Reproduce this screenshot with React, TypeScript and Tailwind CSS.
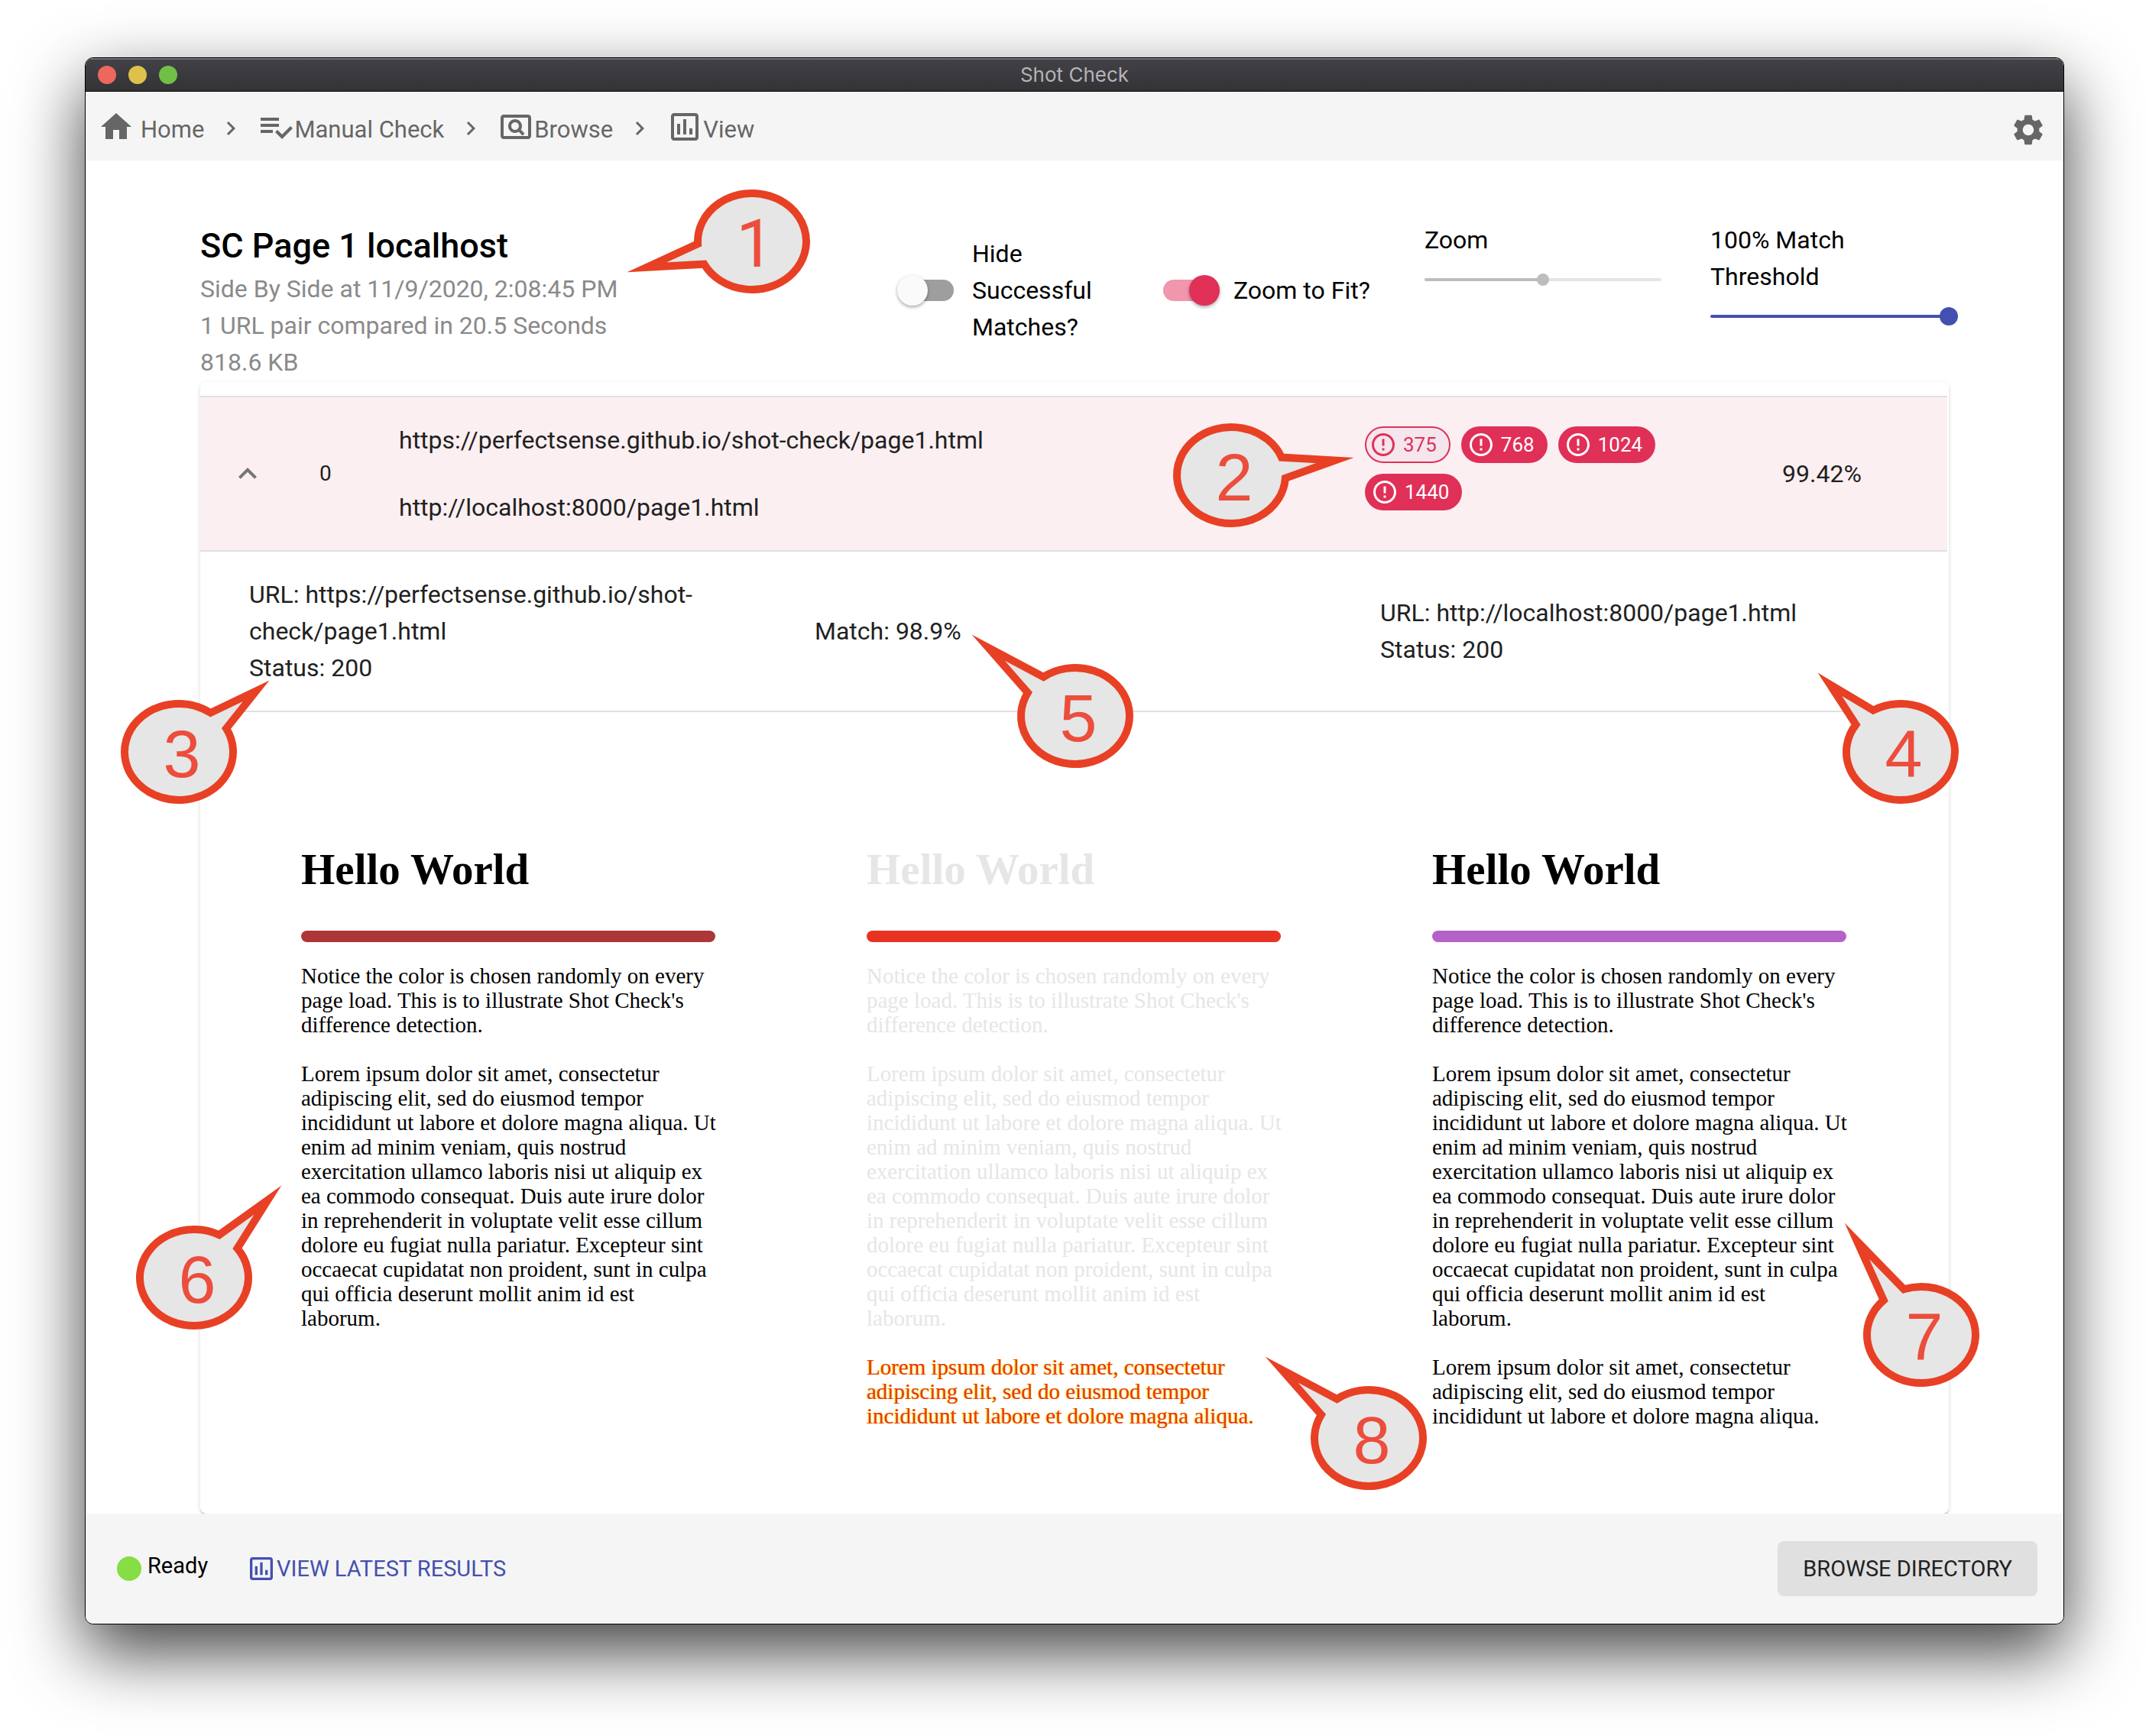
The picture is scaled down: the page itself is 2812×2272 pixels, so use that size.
import React from "react";

type IconProps = { d: string; className?: string };

const paths = {
  home: "M10 20v-6h4v6h5v-8h3L12 3 2 12h3v8z",
  playlist:
    "M14 10H2v2h12v-2zm0-4H2v2h12V6zM2 16h8v-2H2v2zm19.5-4.5L23 13l-6.99 7-4.51-4.5L13 14l3.01 3 5.49-5.5z",
  pageview:
    "M20 4H4c-1.1 0-2 .9-2 2v12c0 1.1.9 2 2 2h16c1.1 0 2-.9 2-2V6c0-1.1-.9-2-2-2zm0 14H4V6h16v12zM11.49 16c.88 0 1.7-.26 2.39-.7l2.44 2.44 1.42-1.42-2.44-2.43c.44-.7.7-1.51.7-2.39C16 9.01 13.99 7 11.5 7S7 9.01 7 11.5 9.01 16 11.49 16zm.01-7c1.38 0 2.5 1.12 2.5 2.5S12.88 14 11.5 14 9 12.88 9 11.5 10.12 9 11.5 9z",
  assessment:
    "M9 17H7v-7h2v7zm4 0h-2V7h2v10zm4 0h-2v-4h2v4zm2 2H5V5h14v14zm0-16H5c-1.1 0-2 .9-2 2v14c0 1.1.9 2 2 2h14c1.1 0 2-.9 2-2V5c0-1.1-.9-2-2-2z",
  chevronRight: "M10 6L8.59 7.41 13.17 12l-4.58 4.59L10 18l6-6z",
  chevronUp: "M7.41 15.41L12 10.83l4.59 4.58L18 14l-6-6-6 6z",
  settings:
    "M19.14 12.94c.04-.3.06-.61.06-.94 0-.32-.02-.64-.07-.94l2.03-1.58c.18-.14.23-.41.12-.61l-1.92-3.32c-.12-.22-.37-.29-.59-.22l-2.39.96c-.5-.38-1.03-.7-1.62-.94l-.36-2.54c-.04-.24-.24-.41-.48-.41h-3.84c-.24 0-.43.17-.47.41l-.36 2.54c-.59.24-1.13.57-1.62.94l-2.39-.96c-.22-.08-.47 0-.59.22L2.74 8.87c-.12.21-.08.47.12.61l2.03 1.58c-.05.3-.09.63-.09.94s.02.64.07.94l-2.03 1.58c-.18.14-.23.41-.12.61l1.92 3.32c.12.22.37.29.59.22l2.39-.96c.5.38 1.03.7 1.62.94l.36 2.54c.05.24.24.41.48.41h3.84c.24 0 .44-.17.47-.41l.36-2.54c.59-.24 1.13-.56 1.62-.94l2.39.96c.22.08.47 0 .59-.22l1.92-3.32c.12-.22.07-.47-.12-.61l-2.01-1.58zM12 15.6c-1.98 0-3.6-1.62-3.6-3.6s1.62-3.6 3.6-3.6 3.6 1.62 3.6 3.6-1.62 3.6-3.6 3.6z",
  error:
    "M11 15h2v2h-2zm0-8h2v6h-2zm.99-5C6.47 2 2 6.48 2 12s4.47 10 9.99 10C17.52 22 22 17.52 22 12S17.52 2 11.99 2zM12 20c-4.42 0-8-3.58-8-8s3.58-8 8-8 8 3.58 8 8-3.58 8-8 8z",
};

function Icon({ d, className = "size-12" }: IconProps) {
  return (
    <svg viewBox="0 0 24 24" fill="currentColor" aria-hidden="true" className={`shrink-0 ${className}`}>
      <path d={d} />
    </svg>
  );
}

function TitleBar() {
  return (
    <div className="grid h-11 grid-cols-3 items-center border-b border-black bg-linear-to-b from-[#434247] to-[#333336] px-4 shadow-[inset_0_2px_0_#6f7072]">
      <div className="flex gap-4">
        <button type="button" aria-label="Close" className="size-6 rounded-full bg-[#ec675e]" />
        <button type="button" aria-label="Minimize" className="size-6 rounded-full bg-[#e0c04c]" />
        <button type="button" aria-label="Full screen" className="size-6 rounded-full bg-[#72bf47]" />
      </div>
      <span className="text-center font-['Inter',sans-serif] text-[26px] leading-8 text-[#b4b4b6]">Shot Check</span>
    </div>
  );
}

const crumbs = [
  { label: "Home", icon: paths.home, gap: "gap-2" },
  { label: "Manual Check", icon: paths.playlist, gap: "gap-0" },
  { label: "Browse", icon: paths.pageview, gap: "gap-0" },
  { label: "View", icon: paths.assessment, gap: "gap-0" },
];

function Toolbar() {
  return (
    <header className="flex items-center justify-between bg-[#f5f5f5] pt-[22px] pr-[22px] pb-3 pl-4 text-[#666]">
      <nav aria-label="Breadcrumb">
        <ol className="flex items-center gap-[17px] text-[31px] leading-[48px]">
          {crumbs.map((crumb, i) => (
            <React.Fragment key={crumb.label}>
              {i > 0 && (
                <li aria-hidden="true" className="pb-1">
                  <Icon d={paths.chevronRight} className="size-9" />
                </li>
              )}
              <li>
                <a href="#" className={`flex items-center ${crumb.gap}`}>
                  <Icon d={crumb.icon} className="mb-2 size-12" />
                  {crumb.label}
                </a>
              </li>
            </React.Fragment>
          ))}
        </ol>
      </nav>
      <button type="button" aria-label="Settings">
        <Icon d={paths.settings} />
      </button>
    </header>
  );
}

function Switch({ label, checked = false, className }: { label: string; checked?: boolean; className: string }) {
  return (
    <label className={`mt-[18px] flex h-36 items-center gap-6 ${className}`}>
      <span className="relative flex h-7 w-[68px] shrink-0">
        <input
          type="checkbox"
          role="switch"
          defaultChecked={checked}
          className="peer h-7 w-full appearance-none rounded-full bg-[#9e9e9e] checked:bg-[#f096ad]"
        />
        <span className="pointer-events-none absolute -top-1.5 -left-1.5 size-10 rounded-full bg-[#fafafa] shadow-[0_2px_4px_rgba(0,0,0,0.35)] peer-checked:right-[-6px] peer-checked:left-auto peer-checked:bg-[#e03058]" />
      </span>
      {label}
    </label>
  );
}

function Summary() {
  return (
    <section className="grid grid-cols-[918fr_342fr_342fr_374fr_312fr] text-[32px] leading-[48px] text-black">
      <div className="pb-0.5 text-[#8a8a8a]">
        <h1 className="text-[45px] leading-[64px] font-medium text-black">SC Page 1 localhost</h1>
        <p>Side By Side at 11/9/2020, 2:08:45 PM</p>
        <p>1 URL pair compared in 20.5 Seconds</p>
        <p>818.6 KB</p>
      </div>
      <Switch label="Hide Successful Matches?" className="pr-20" />
      <Switch label="Zoom to Fit?" checked className="whitespace-nowrap" />
      <div className="pr-16">
        <label htmlFor="zoom" className="block">
          Zoom
        </label>
        <input
          id="zoom"
          type="range"
          disabled
          defaultValue={50}
          className="block h-14 w-full appearance-none bg-transparent [&::-webkit-slider-runnable-track]:h-1 [&::-webkit-slider-runnable-track]:rounded-full [&::-webkit-slider-runnable-track]:bg-linear-to-r [&::-webkit-slider-runnable-track]:from-[#bdbdbd] [&::-webkit-slider-runnable-track]:from-50% [&::-webkit-slider-runnable-track]:to-[#e5e5e5] [&::-webkit-slider-runnable-track]:to-50% [&::-webkit-slider-thumb]:-mt-1.5 [&::-webkit-slider-thumb]:size-4 [&::-webkit-slider-thumb]:appearance-none [&::-webkit-slider-thumb]:rounded-full [&::-webkit-slider-thumb]:bg-[#bdbdbd]"
        />
      </div>
      <div>
        <label htmlFor="threshold" className="block">
          100% Match Threshold
        </label>
        <div className="-mr-3">
          <input
            id="threshold"
            type="range"
            defaultValue={100}
            className="block h-14 w-full appearance-none bg-transparent [&::-webkit-slider-runnable-track]:h-1 [&::-webkit-slider-runnable-track]:rounded-full [&::-webkit-slider-runnable-track]:bg-[#4450af] [&::-webkit-slider-thumb]:-mt-2.5 [&::-webkit-slider-thumb]:size-6 [&::-webkit-slider-thumb]:appearance-none [&::-webkit-slider-thumb]:rounded-full [&::-webkit-slider-thumb]:bg-[#4450af]"
          />
        </div>
      </div>
    </section>
  );
}

function Chip({ label, outlined = false }: { label: string; outlined?: boolean }) {
  const look = outlined
    ? "border-2 border-[#e03058] bg-[#f5e6ee] pr-4 pl-1 text-[#e03058]"
    : "bg-[#e03058] pr-[17px] pl-2 text-white";
  return (
    <button type="button" className={`flex h-12 items-center gap-2 rounded-full text-[26px] leading-8 ${look}`}>
      <Icon d={paths.error} className="size-9" />
      {label}
    </button>
  );
}

const notice = `Notice the color is chosen randomly on every
page load. This is to illustrate Shot Check's
difference detection.`;

const lorem = `Lorem ipsum dolor sit amet, consectetur
adipiscing elit, sed do eiusmod tempor
incididunt ut labore et dolore magna aliqua. Ut
enim ad minim veniam, quis nostrud
exercitation ullamco laboris nisi ut aliquip ex
ea commodo consequat. Duis aute irure dolor
in reprehenderit in voluptate velit esse cillum
dolore eu fugiat nulla pariatur. Excepteur sint
occaecat cupidatat non proident, sunt in culpa
qui officia deserunt mollit anim id est
laborum.`;

const extra = `Lorem ipsum dolor sit amet, consectetur
adipiscing elit, sed do eiusmod tempor
incididunt ut labore et dolore magna aliqua.`;

function Shot({ text, bar, extraClass }: { text: string; bar: string; extraClass?: string }) {
  return (
    <article
      className={`pr-[98px] pl-[100px] font-['Liberation_Serif',serif] text-[29px] leading-8 whitespace-pre ${text}`}
    >
      <h2 className="text-[57px] leading-[64px] font-bold">Hello World</h2>
      <div className={`mt-12 mb-7 h-[15px] rounded-full ${bar}`} />
      <div className="flex flex-col gap-8">
        <p>{notice}</p>
        <p>{lorem}</p>
        {extraClass !== undefined && <p className={extraClass}>{extra}</p>}
      </div>
    </article>
  );
}

function Results() {
  return (
    <section className="rounded-lg bg-white pt-[18px] pr-0.5 shadow-[0_4px_2px_-2px_rgba(0,0,0,0.2),0_2px_2px_rgba(0,0,0,0.1),0_2px_6px_rgba(0,0,0,0.12)]">
      <table className="w-full table-fixed border-separate border-spacing-0 border-t-2 border-[#e0e0e0] text-[32px] leading-[48px] text-[#212121]">
        <colgroup>
          <col className="w-[124px]" />
          <col className="w-[102px]" />
          <col />
          <col className="w-[544px]" />
          <col className="w-[250px]" />
        </colgroup>
        <tbody>
          <tr className="bg-[#fbeff1]">
            <td className="h-[202px] border-b-2 border-[#e0e0e0] pl-[38px]">
              <button type="button" aria-label="Collapse row" className="block text-[#757575]">
                <Icon d={paths.chevronUp} />
              </button>
            </td>
            <td className="border-b-2 border-[#e0e0e0] pl-8 text-[28px]">0</td>
            <td className="border-b-2 border-[#e0e0e0] px-[34px]">
              <p className="mb-10">https://perfectsense.github.io/shot-check/page1.html</p>
              <p>http://localhost:8000/page1.html</p>
            </td>
            <td className="border-b-2 border-[#e0e0e0] px-8">
              <div className="flex flex-wrap gap-3.5 pb-3.5">
                <Chip label="375" outlined />
                <Chip label="768" />
                <Chip label="1024" />
                <Chip label="1440" />
              </div>
            </td>
            <td className="border-b-2 border-[#e0e0e0] px-[34px]">99.42%</td>
          </tr>
          <tr>
            <td colSpan={5} className="pr-[34px] pl-8">
              <div className="grid grid-cols-3 items-center border-b-2 border-[#e0e0e0] py-8">
                <div className="px-8">
                  <p>URL: https://perfectsense.github.io/shot-check/page1.html</p>
                  <p>Status: 200</p>
                </div>
                <p className="px-8">Match: 98.9%</p>
                <div className="px-8">
                  <p>URL: http://localhost:8000/page1.html</p>
                  <p>Status: 200</p>
                </div>
              </div>
              <div className="grid grid-cols-3 pt-[174px] pb-28">
                <Shot text="text-black" bar="bg-[#ac3638]" />
                <Shot
                  text="text-[#e6e6e6]"
                  bar="bg-[#e83323]"
                  extraClass="text-[#e83323] [text-shadow:1px_0_#ffee33,-1px_0_#ffee33]"
                />
                <Shot text="text-black" bar="bg-[#b562c8]" extraClass="" />
              </div>
            </td>
          </tr>
        </tbody>
      </table>
    </section>
  );
}

function StatusBar() {
  return (
    <footer className="flex h-36 items-center bg-[#f5f5f5] pr-[34px] pl-[41px] text-[29px] leading-10">
      <span className="size-8 rounded-full bg-[#86dd44]" />
      <span className="pb-2 pl-2 text-black">Ready</span>
      <a href="#" className="ml-[50px] flex items-center text-[#4450af]">
        <Icon d={paths.assessment} className="size-10" />
        VIEW LATEST RESULTS
      </a>
      <button type="button" className="ml-auto rounded-lg bg-[#e0e0e0] px-[33px] py-4 text-[#212121]">
        BROWSE DIRECTORY
      </button>
    </footer>
  );
}

type Pin = { n: number; place: string; tip: [number, number] };

const pins: Pin[] = [
  { n: 1, place: "left-[908px] top-[248px]", tip: [-163, 40] },
  { n: 2, place: "left-[1535px] top-[554px]", tip: [160, -23] },
  { n: 3, place: "left-[158px] top-[916px]", tip: [118, -93] },
  { n: 4, place: "left-[2411px] top-[916px]", tip: [-108, -103] },
  { n: 5, place: "left-[1331px] top-[869px]", tip: [-135, -106] },
  { n: 6, place: "left-[178px] top-[1604px]", tip: [114, -120] },
  { n: 7, place: "left-[2438px] top-[1679px]", tip: [-100, -146] },
  { n: 8, place: "left-[1715px] top-[1814px]", tip: [-135, -106] },
];

const RX = 71;
const RY = 63;
const STROKE = 10;

// Outline of a balloon centred on the origin; the stroke's mitre ends at the tip.
function balloon([tx, ty]: [number, number]) {
  const mid = Math.atan2(ty / RY, tx / RX);
  const at = (a: number) => [RX * Math.cos(a), RY * Math.sin(a)];
  const [ax, ay] = at(mid + 0.22);
  const [bx, by] = at(mid - 0.22);
  const length = Math.hypot(tx, ty);
  const base = Math.hypot(ax - bx, ay - by) / 2;
  const root = Math.hypot((ax + bx) / 2, (ay + by) / 2);
  const k = (root + (length - root) / (1 + STROKE / 2 / base)) / length;
  return `M${ax} ${ay}A${RX} ${RY} 0 1 1 ${bx} ${by}L${tx * k} ${ty * k}Z`;
}

function Callout({ n, place, tip }: Pin) {
  const face = n === 1 ? "font-['Roboto',sans-serif]" : "font-['Liberation_Sans',sans-serif]";
  return (
    <div className={`pointer-events-none absolute h-[136px] w-[152px] ${place}`}>
      <svg viewBox="-76 -68 152 136" className="absolute inset-0 size-full overflow-visible" aria-hidden="true">
        <path d={balloon(tip)} fill="#e6e6e6" stroke="#e84024" strokeWidth={STROKE} strokeMiterlimit={30} />
      </svg>
      <span
        className={`absolute inset-0 flex items-center justify-center pt-1.5 pl-2 text-[88px] leading-none text-[#ec4d3c] ${face}`}
      >
        {n}
      </span>
    </div>
  );
}

export default function App() {
  return (
    <div className="relative min-h-screen overflow-hidden bg-white px-[111px] pt-[75px] pb-36 font-['Roboto',sans-serif]">
      <div className="overflow-hidden rounded-[11px] border border-black bg-white shadow-[0_36px_90px_rgba(0,0,0,0.75)]">
        <TitleBar />
        <Toolbar />
        <main className="overflow-hidden px-[150px] pt-20">
          <Summary />
          <Results />
        </main>
        <StatusBar />
      </div>
      {pins.map((pin) => (
        <Callout key={pin.n} {...pin} />
      ))}
    </div>
  );
}
